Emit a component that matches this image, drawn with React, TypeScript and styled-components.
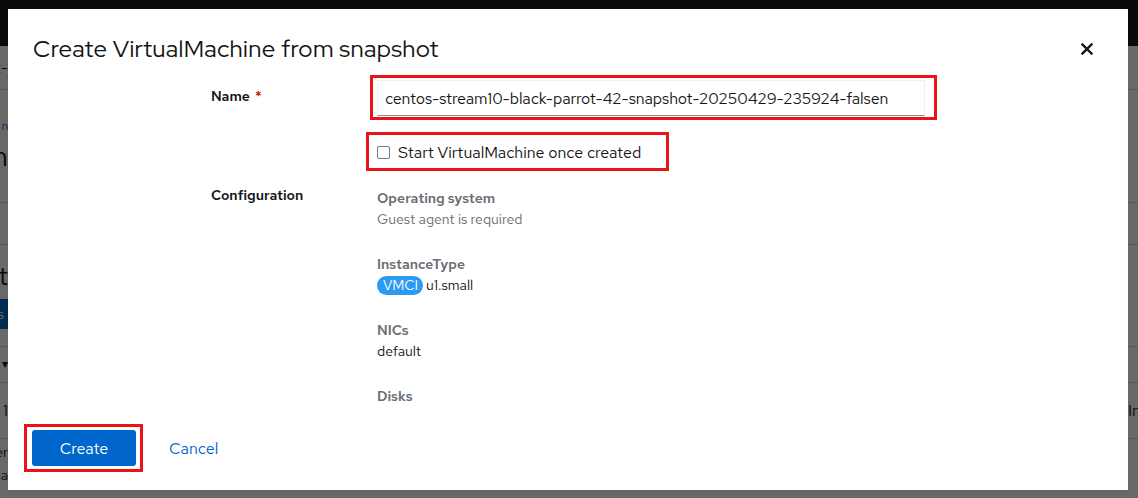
import React from "react";
import styled, { createGlobalStyle } from "styled-components";

const FONT = `"Red Hat Text", "Inter", "Liberation Sans", sans-serif`;
const DISPLAY = `"Red Hat Display", "Inter", "Liberation Sans", sans-serif`;

const GlobalStyle = createGlobalStyle`
  html, body { margin: 0; padding: 0; }
  body { font-family: ${FONT}; color: #151515; background: #ffffff; }
  * { box-sizing: border-box; }
`;

/* ---------- background page (behind the modal) ---------- */

const Page = styled.div`
  position: relative;
  width: 1138px;
  height: 498px;
  overflow: hidden;
  background: #ffffff;
  display: flex;
  flex-direction: column;
`;

const Masthead = styled.header`
  height: 46px;
  flex: none;
  background: #151515;
`;

const BgRow = styled.div<{ $h: number; $line?: boolean }>`
  height: ${(p) => p.$h}px;
  flex: none;
  display: flex;
  align-items: center;
  justify-content: space-between;
  border-bottom: ${(p) => (p.$line ? "1px solid #d2d2d2" : "none")};
`;

const Gutter = styled.div`
  width: 8px;
  display: flex;
  flex-direction: column;
  align-items: flex-end;
  gap: 8px;
  white-space: nowrap;
  overflow: visible;
`;

const RightGutter = styled.div`
  width: 10px;
  display: flex;
  justify-content: flex-start;
  white-space: nowrap;
`;

const BgText = styled.span<{ $size?: number; $color?: string }>`
  font-size: ${(p) => p.$size ?? 14}px;
  color: ${(p) => p.$color ?? "#151515"};
  line-height: 1.1;
`;

const BgButton = styled.span`
  background: #0066cc;
  color: #fff;
  font-size: 14px;
  line-height: 30px;
  padding: 0 4px 0 8px;
`;

/* ---------- modal ---------- */

const Backdrop = styled.div`
  position: absolute;
  inset: 0;
  background: rgba(3, 3, 3, 0.6);
  display: flex;
  padding: 9px 10px 8px 8px;
`;

const Modal = styled.div`
  flex: 1;
  background: #ffffff;
  display: flex;
  flex-direction: column;
  overflow: hidden;
`;

const Header = styled.div`
  display: flex;
  align-items: center;
  justify-content: space-between;
  padding: 24px 29px 0 25px;
`;

const Title = styled.h1`
  margin: 0;
  font-family: ${DISPLAY};
  font-size: 24px;
  line-height: 31px;
  font-weight: 400;
  letter-spacing: 0.35px;
  color: #151515;
`;

const CloseButton = styled.button`
  width: 24px;
  height: 24px;
  padding: 0;
  border: 0;
  background: transparent;
  display: flex;
  align-items: center;
  justify-content: center;
  cursor: pointer;
`;

const Body = styled.div`
  flex: 1;
  overflow: hidden;
  padding-top: 16px;
`;

const Form = styled.div`
  display: grid;
  grid-template-columns: 166px 548px;
  justify-content: center;
  row-gap: 0;
`;

const Label = styled.div<{ $pt?: number }>`
  font-size: 14px;
  line-height: 21px;
  font-weight: 600;
  color: #151515;
  padding-top: ${(p) => p.$pt ?? 0}px;
`;

const Required = styled.span`
  color: #c9190b;
  margin-left: 5px;
`;

const Control = styled.div<{ $mb?: number }>`
  position: relative;
  margin-bottom: ${(p) => p.$mb ?? 0}px;
`;

const TextInput = styled.input`
  width: 100%;
  height: 36px;
  padding: 0 8px 0 7px;
  font-family: ${FONT};
  font-size: 16px;
  letter-spacing: -0.13px;
  color: #151515;
  border: 1px solid #f0f0f0;
  border-bottom-color: #8a8d90;
  background: #fff;
  outline: none;
`;

const Highlight = styled.div<{ $t: number; $r: number; $b: number; $l: number }>`
  position: absolute;
  top: ${(p) => p.$t}px;
  right: ${(p) => p.$r}px;
  bottom: ${(p) => p.$b}px;
  left: ${(p) => p.$l}px;
  border: 3px solid #e8141c;
  pointer-events: none;
`;

const CheckRow = styled.label`
  position: relative;
  display: inline-flex;
  align-items: center;
  gap: 8px;
  height: 24px;
  font-size: 16px;
  color: #151515;
`;

const CheckBox = styled.span`
  width: 13px;
  height: 13px;
  border: 1px solid #767676;
  border-radius: 2px;
  background: #fff;
  flex: none;
`;

const DescList = styled.dl`
  margin: 0;
  padding-top: 3px;
  display: flex;
  flex-direction: column;
  gap: 24px;
`;

const Group = styled.div``;

const Term = styled.dt`
  font-size: 14px;
  line-height: 21px;
  font-weight: 600;
  color: #6a6e73;
`;

const Desc = styled.dd<{ $muted?: boolean }>`
  margin: 0;
  font-size: 14px;
  line-height: 21px;
  color: ${(p) => (p.$muted ? "#6a6e73" : "#151515")};
  display: flex;
  align-items: center;
  gap: 3px;
`;

const Pill = styled.span`
  background: #2b9af3;
  color: #ffffff;
  font-size: 14px;
  line-height: 19px;
  padding: 0 5px 0 6px;
  border-radius: 30px;
`;

const Footer = styled.div`
  display: flex;
  align-items: center;
  gap: 17px;
  padding: 0 24px 24px 24px;
`;

const ButtonWrap = styled.div`
  position: relative;
  display: inline-flex;
`;

const PrimaryButton = styled.button`
  height: 36px;
  width: 104px;
  border: 0;
  border-radius: 3px;
  background: #0066cc;
  color: #ffffff;
  font-family: ${FONT};
  font-size: 16px;
  cursor: pointer;
`;

const LinkButton = styled.button`
  height: 36px;
  padding: 0 16px;
  border: 0;
  background: transparent;
  color: #0066cc;
  font-family: ${FONT};
  font-size: 16px;
  cursor: pointer;
`;

const CloseIcon = () => (
  <svg width="12" height="12" viewBox="0 0 12 12" aria-hidden="true">
    <path d="M1.5 1.5 L10.5 10.5 M10.5 1.5 L1.5 10.5" stroke="#151515" strokeWidth="2.4" strokeLinecap="square" />
  </svg>
);

export default function App() {
  return (
    <>
      <GlobalStyle />
      <Page>
        <Masthead />
        <BgRow $h={44} $line>
          <Gutter>
            <BgText $size={16}>nt-</BgText>
          </Gutter>
          <RightGutter />
        </BgRow>
        <BgRow $h={113} $line>
          <Gutter>
            <BgText $size={12} $color="#0066cc">n</BgText>
            <BgText $size={28}>n</BgText>
          </Gutter>
          <RightGutter />
        </BgRow>
        <BgRow $h={42} $line />
        <BgRow $h={102} $line>
          <Gutter>
            <BgText $size={26}>st</BgText>
            <BgButton>s</BgButton>
          </Gutter>
          <RightGutter />
        </BgRow>
        <BgRow $h={36} $line>
          <Gutter>
            <BgText $size={12}>▾</BgText>
          </Gutter>
          <RightGutter />
        </BgRow>
        <BgRow $h={56} $line>
          <Gutter>
            <BgText $size={16}>1</BgText>
          </Gutter>
          <RightGutter>
            <BgText $size={16}>In</BgText>
          </RightGutter>
        </BgRow>
        <BgRow $h={50}>
          <Gutter>
            <BgText $size={14}>er</BgText>
            <BgText $size={14}>na</BgText>
          </Gutter>
          <RightGutter />
        </BgRow>

        <Backdrop>
          <Modal role="dialog" aria-label="Create VirtualMachine from snapshot">
            <Header>
              <Title>Create VirtualMachine from snapshot</Title>
              <CloseButton aria-label="Close">
                <CloseIcon />
              </CloseButton>
            </Header>
            <Body>
              <Form>
                <Label $pt={6}>
                  Name<Required>*</Required>
                </Label>
                <Control $mb={24}>
                  <TextInput
                    readOnly
                    value="centos-stream10-black-parrot-42-snapshot-20250429-235924-falsen"
                  />
                  <Highlight $t={-5} $r={-12} $b={-4} $l={-7} />
                </Control>

                <div />
                <Control $mb={21}>
                  <CheckRow>
                    <CheckBox />
                    Start VirtualMachine once created
                    <Highlight $t={-8} $r={-28} $b={-7} $l={-11} />
                  </CheckRow>
                </Control>

                <Label>Configuration</Label>
                <DescList>
                  <Group>
                    <Term>Operating system</Term>
                    <Desc $muted>Guest agent is required</Desc>
                  </Group>
                  <Group>
                    <Term>InstanceType</Term>
                    <Desc>
                      <Pill>VMCI</Pill>u1.small
                    </Desc>
                  </Group>
                  <Group>
                    <Term>NICs</Term>
                    <Desc>default</Desc>
                  </Group>
                  <Group>
                    <Term>Disks</Term>
                  </Group>
                </DescList>
              </Form>
            </Body>
            <Footer>
              <ButtonWrap>
                <PrimaryButton>Create</PrimaryButton>
                <Highlight $t={-6} $r={-7} $b={-6} $l={-8} />
              </ButtonWrap>
              <LinkButton>Cancel</LinkButton>
            </Footer>
          </Modal>
        </Backdrop>
      </Page>
    </>
  );
}
